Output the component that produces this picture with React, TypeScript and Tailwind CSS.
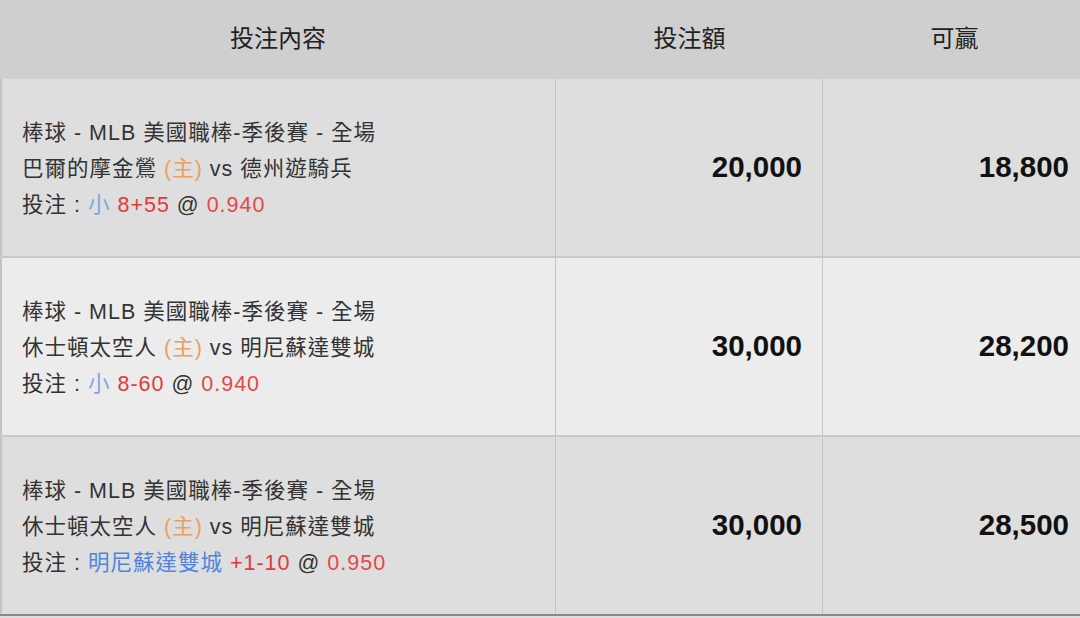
import React from "react";

type Bet = {
  league: string;
  home: string;
  away: string;
  pick: string;
  pickClass: string;
  line: string;
  odds: string;
  stake: string;
  win: string;
  bg: string;
};

const bets: Bet[] = [
  {
    league: "棒球 - MLB 美國職棒-季後賽 - 全場",
    home: "巴爾的摩金鶯",
    away: "德州遊騎兵",
    pick: "小",
    pickClass: "text-[#7fa6e6]",
    line: "8+55",
    odds: "0.940",
    stake: "20,000",
    win: "18,800",
    bg: "bg-[#dedede]",
  },
  {
    league: "棒球 - MLB 美國職棒-季後賽 - 全場",
    home: "休士頓太空人",
    away: "明尼蘇達雙城",
    pick: "小",
    pickClass: "text-[#7fa6e6]",
    line: "8-60",
    odds: "0.940",
    stake: "30,000",
    win: "28,200",
    bg: "bg-[#ececec]",
  },
  {
    league: "棒球 - MLB 美國職棒-季後賽 - 全場",
    home: "休士頓太空人",
    away: "明尼蘇達雙城",
    pick: "明尼蘇達雙城",
    pickClass: "text-[#4f84e0]",
    line: "+1-10",
    odds: "0.950",
    stake: "30,000",
    win: "28,500",
    bg: "bg-[#dedede]",
  },
];

const font = "font-['Liberation_Sans','Noto_Sans_CJK_TC',sans-serif]";

export default function App() {
  return (
    <div className={`w-[1080px] h-[618px] overflow-hidden bg-[#dedede] ${font}`}>
      {/* Header */}
      <div className="grid grid-cols-[556px_267px_1fr] h-[79px] bg-[#cfcfcf] text-[24px] text-[#222]">
        <div className="flex items-center justify-center pb-[2px]">投注內容</div>
        <div className="flex items-center justify-center pb-[2px]">投注額</div>
        <div className="flex items-center justify-center pb-[2px] pl-[6px]">可贏</div>
      </div>

      {/* Rows */}
      {bets.map((b, i) => (
        <div
          key={i}
          className={`grid grid-cols-[556px_267px_1fr] h-[179px] border-b-2 ${
            i === bets.length - 1 ? "border-[#8a8a8a]" : "border-[#c9c9c9]"
          } ${b.bg}`}
        >
          <div className="flex flex-col justify-center pl-[20px] pt-[2px] border-l-2 border-r border-[#c4c4c4] text-[21.5px] leading-[36px] tracking-[1px] text-[#333]">
            <div>{b.league}</div>
            <div>
              {b.home} <span className="text-[#e8a063]">(主)</span> vs {b.away}
            </div>
            <div>
              投注 : <span className={b.pickClass}>{b.pick}</span>{" "}
              <span className="text-[#e23a3a]">{b.line}</span> @{" "}
              <span className="text-[#e54848]">{b.odds}</span>
            </div>
          </div>
          <div className="flex items-center justify-end pr-[20px] border-r border-[#c4c4c4] text-[29.5px] font-bold text-[#111]">
            {b.stake}
          </div>
          <div className="flex items-center justify-end pr-[11px] text-[29.5px] font-bold text-[#111]">
            {b.win}
          </div>
        </div>
      ))}
    </div>
  );
}
